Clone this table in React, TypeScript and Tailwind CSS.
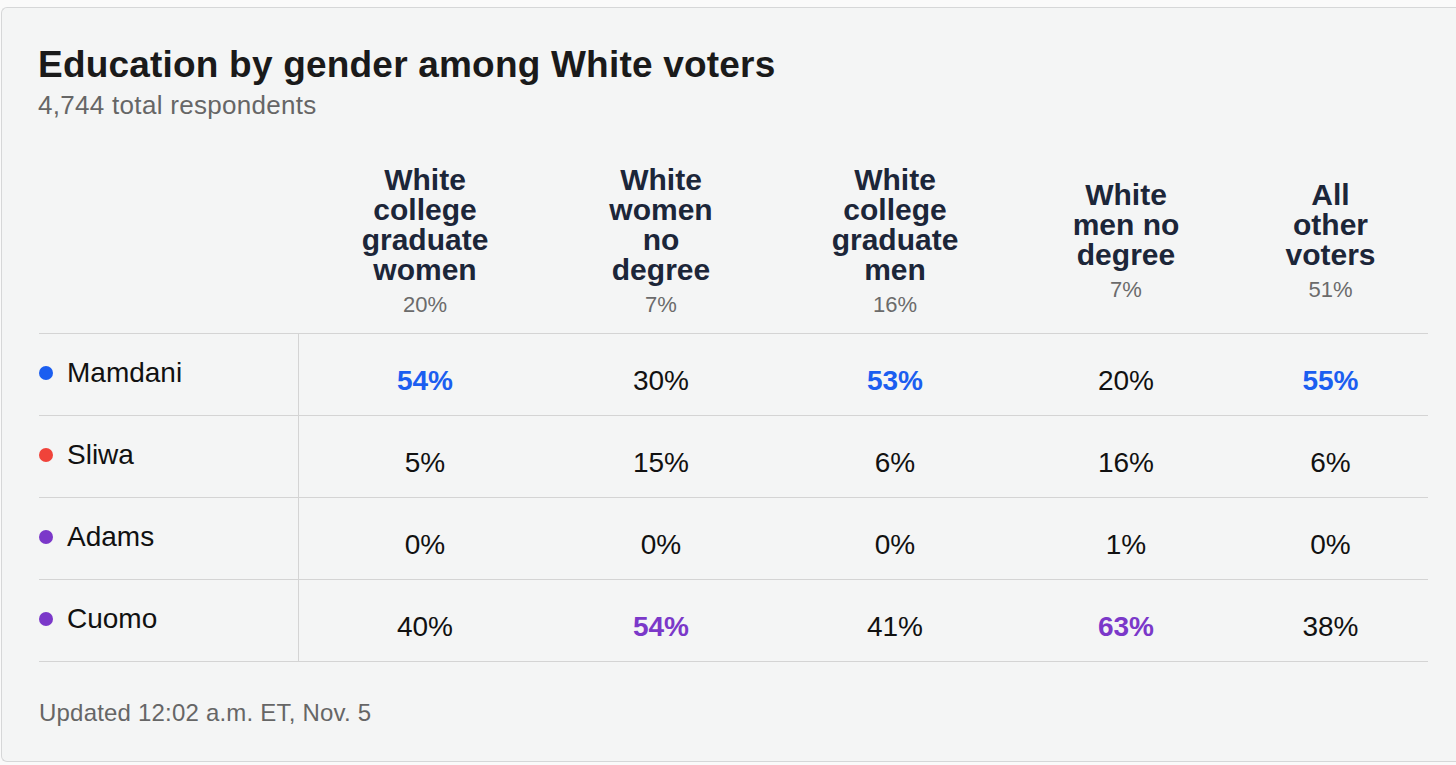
import React from 'react';

interface Column {
  lines: string[];
  share: string;
  width: string;
}

interface Candidate {
  name: string;
  dot: string;
  values: { v: string; lead?: boolean }[];
  lead: string;
}

const COLUMNS: Column[] = [
  { lines: ['White', 'college', 'graduate', 'women'], share: '20%', width: 'w-[252px]' },
  { lines: ['White', 'women', 'no', 'degree'], share: '7%', width: 'w-[220px]' },
  { lines: ['White', 'college', 'graduate', 'men'], share: '16%', width: 'w-[248px]' },
  { lines: ['White', 'men no', 'degree'], share: '7%', width: 'w-[214px]' },
  { lines: ['All', 'other', 'voters'], share: '51%', width: 'w-[195px]' },
];

const CANDIDATES: Candidate[] = [
  {
    name: 'Mamdani',
    dot: 'bg-[#1b5ef0]',
    lead: 'text-[#1b5ef0]',
    values: [{ v: '54%', lead: true }, { v: '30%' }, { v: '53%', lead: true }, { v: '20%' }, { v: '55%', lead: true }],
  },
  {
    name: 'Sliwa',
    dot: 'bg-[#f0433a]',
    lead: 'text-[#f0433a]',
    values: [{ v: '5%' }, { v: '15%' }, { v: '6%' }, { v: '16%' }, { v: '6%' }],
  },
  {
    name: 'Adams',
    dot: 'bg-[#7b38c9]',
    lead: 'text-[#7b38c9]',
    values: [{ v: '0%' }, { v: '0%' }, { v: '0%' }, { v: '1%' }, { v: '0%' }],
  },
  {
    name: 'Cuomo',
    dot: 'bg-[#7b38c9]',
    lead: 'text-[#7b38c9]',
    values: [{ v: '40%' }, { v: '54%', lead: true }, { v: '41%' }, { v: '63%', lead: true }, { v: '38%' }],
  },
];

export default function App() {
  return (
    <div className="min-h-screen bg-[#fafafa] pt-[7px] pl-[1px] font-['Liberation_Sans',Arial,sans-serif] overflow-hidden">
      <div className="bg-[#f4f5f5] border-l border-t border-b border-[#d6d7d8] rounded-l-[6px] pl-[36px] pt-[35px] pb-[34px]">
        {/* Title */}
        <h1 className="text-[37px] leading-[43px] font-bold text-[#1a1a1a] tracking-[0.2px]">
          Education by gender among White voters
        </h1>
        <p className="mt-[4px] text-[26px] leading-[30px] text-[#666] tracking-[0.3px]">4,744 total respondents</p>

        {/* Table */}
        <div className="mt-[31px] ml-[1px] w-[1389px]">
          {/* Header */}
          <div className="flex h-[183px] items-center border-b border-[#d4d4d4]">
            <div className="w-[260px] shrink-0" />
            {COLUMNS.map((col) => (
              <div key={col.lines.join('-') + col.share} className={`${col.width} shrink-0 flex flex-col items-center`}>
                {col.lines.map((line) => (
                  <div key={line} className="text-[30px] leading-[30px] font-bold text-[#1c2639] text-center">
                    {line}
                  </div>
                ))}
                <div className="mt-[6px] text-[22px] leading-[28px] text-[#6b6b6b]">{col.share}</div>
              </div>
            ))}
          </div>

          {/* Rows */}
          {CANDIDATES.map((c) => (
            <div key={c.name} className="flex h-[82px] border-b border-[#d4d4d4]">
              <div className="w-[260px] shrink-0 border-r border-[#d4d4d4] flex items-start pt-[23px]">
                <span className={`w-[14px] h-[14px] rounded-full ${c.dot} mt-[9px]`} />
                <span className="ml-[14px] text-[28px] leading-[32px] text-[#111]">{c.name}</span>
              </div>
              {c.values.map((val, i) => (
                <div
                  key={i}
                  className={`${COLUMNS[i].width} shrink-0 text-center pt-[31px] text-[28px] leading-[32px] ${
                    val.lead ? `font-bold ${c.lead}` : 'text-[#111]'
                  }`}
                >
                  {val.v}
                </div>
              ))}
            </div>
          ))}
        </div>

        {/* Footer */}
        <p className="mt-[37px] ml-[1px] text-[24px] leading-[28px] text-[#666] tracking-[0.2px]">Updated 12:02 a.m. ET, Nov. 5</p>
      </div>
    </div>
  );
}
